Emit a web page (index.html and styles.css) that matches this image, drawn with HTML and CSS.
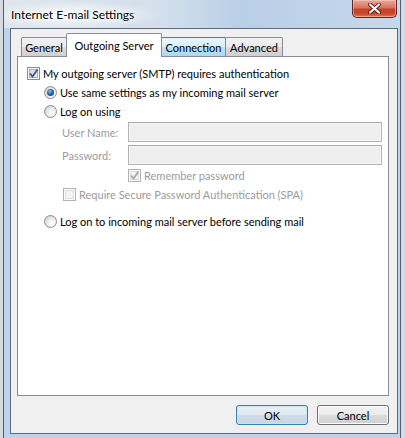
FILE: index.html
```html
<!DOCTYPE html>
<html>
<head>
<meta charset="utf-8">
<link rel="stylesheet" href="styles.css">
</head>
<body>
<div class="window">
  <div class="titlebar">
    <span class="title">Internet E-mail Settings</span>
    <div class="close">
      <svg width="17" height="11" viewBox="0 0 17 11">
        <path d="M4 1.5 L13 9.5 M13 1.5 L4 9.5" stroke="#5a1a12" stroke-width="4" stroke-linecap="round"/>
        <path d="M4 1.5 L13 9.5 M13 1.5 L4 9.5" stroke="#ffffff" stroke-width="2.2" stroke-linecap="round"/>
      </svg>
    </div>
  </div>
  <div class="client">
    <div class="tabs">
      <div class="tab tab-general">General</div>
      <div class="tab tab-outgoing selected">Outgoing Server</div>
      <div class="tab tab-connection hover">Connection</div>
      <div class="tab tab-advanced">Advanced</div>
    </div>
    <div class="panel">
      <div class="row row-main">
        <span class="checkbox">
          <svg class="tick" width="13" height="13" viewBox="0 0 13 13"><path d="M3 6.5 L5.5 9.5 L10.5 2.5" stroke="#3d5597" stroke-width="1.8" fill="none"/></svg>
        </span>
        <span class="label">My outgoing server (SMTP) requires authentication</span>
      </div>
      <div class="indent">
        <div class="row">
          <span class="radio on"></span>
          <span class="label">Use same settings as my incoming mail server</span>
        </div>
        <div class="row">
          <span class="radio"></span>
          <span class="label">Log on using</span>
        </div>
        <div class="fields">
          <span class="flabel disabled">User Name:</span>
          <span class="input"></span>
          <span class="flabel disabled">Password:</span>
          <span class="input"></span>
        </div>
        <div class="row row-remember">
          <span class="checkbox disabled-box">
            <svg class="tick" width="13" height="13" viewBox="0 0 13 13"><path d="M3 6.5 L5.5 9.5 L10.5 2.5" stroke="#a8a8a8" stroke-width="1.8" fill="none"/></svg>
          </span>
          <span class="label disabled">Remember password</span>
        </div>
        <div class="row row-spa">
          <span class="checkbox disabled-box"></span>
          <span class="label disabled">Require Secure Password Authentication (SPA)</span>
        </div>
        <div class="row row-last">
          <span class="radio"></span>
          <span class="label">Log on to incoming mail server before sending mail</span>
        </div>
      </div>
    </div>
    <div class="buttons">
      <button class="btn default">OK</button>
      <button class="btn">Cancel</button>
    </div>
  </div>
</div>
</body>
</html>
```

FILE: styles.css
```css
html, body {
  margin: 0;
  padding: 0;
}
body {
  width: 405px;
  height: 438px;
  overflow: hidden;
  background: #d6dbe1;
  font-family: Lato, "Open Sans", sans-serif;
  font-size: 11px;
  color: #000;
}
.window {
  margin-left: 3px;
  width: 398px;
  height: 446px;
  box-sizing: border-box;
  border: 1px solid #4d5e73;
  border-top: none;
  padding: 0 2px 6px 6px;
  background: #bcd3ec;
  display: flex;
  flex-direction: column;
}
.titlebar {
  height: 28px;
  margin: 0 -2px 0 -6px;
  padding: 0 3px 0 7px;
  display: flex;
  align-items: flex-start;
  background:
    radial-gradient(ellipse 90px 14px at 70px 15px, rgba(255,255,255,0.9), rgba(255,255,255,0) 100%),
    linear-gradient(to right, #dfe6ee 0%, #d3dfeb 40%, #b9cfe7 60%, #c6d8eb 100%);
}
.title {
  margin-top: 7px;
  line-height: 16px;
  font-size: 12px;
  color: #000;
  text-shadow: 0 0 6px #fff, 0 0 3px #fff;
}
.close {
  margin-left: auto;
  width: 45px;
  height: 18px;
  box-sizing: border-box;
  border: 1px solid #5c2a23;
  border-top: none;
  border-radius: 0 0 5px 5px;
  background: linear-gradient(#e9a99b 0%, #d9735f 45%, #c7412a 55%, #c9472d 80%, #e27a55 100%);
  box-shadow: inset 0 0 0 1px rgba(255,220,210,0.45);
  display: flex;
  align-items: center;
  justify-content: center;
}
.client {
  width: 388px;
  height: 406px;
  box-sizing: border-box;
  border: 1px solid #5b6c80;
  background: #f0f0f0;
  padding: 4px 8px 8px 6px;
  display: flex;
  flex-direction: column;
}
.tabs {
  height: 23px;
  display: flex;
  align-items: flex-end;
  padding-left: 4px;
  position: relative;
  z-index: 2;
}
.tab {
  height: 19px;
  box-sizing: border-box;
  border: 1px solid #898c95;
  border-bottom: none;
  border-radius: 2px 2px 0 0;
  background: linear-gradient(#f2f2f2, #ebebeb 50%, #dddddd 50%, #cfcfcf);
  display: flex;
  align-items: center;
  justify-content: center;
  margin-left: -1px;
  white-space: nowrap;
}
.tab-general { width: 46px; margin-left: 0; }
.tab-outgoing { width: 96px; }
.tab-connection { width: 65px; }
.tab-advanced { width: 58px; }
.tab.selected {
  height: 24px;
  margin-bottom: -1px;
  background: #fff;
  padding-bottom: 1px;
  position: relative;
  z-index: 3;
}
.tab.hover {
  border-color: #3c7fb1;
  background: linear-gradient(#eaf6fd, #d9f0fc 50%, #bee6fd 50%, #a7d9f5);
}
.panel {
  height: 340px;
  box-sizing: border-box;
  border: 1px solid #898c95;
  background: #fff;
  padding: 7px 0 0 9px;
  position: relative;
  z-index: 1;
}
.row {
  height: 19px;
  display: flex;
  align-items: center;
}
.label {
  margin-left: 3px;
  white-space: nowrap;
}
.disabled {
  color: #9b9b9b;
}
.checkbox {
  width: 13px;
  height: 13px;
  box-sizing: border-box;
  border: 1px solid #8e8f8f;
  background: linear-gradient(135deg, #cbcfd5, #f6f6f6);
  box-shadow: inset 0 0 0 1px #f4f4f4, inset 0 0 0 2px #aeb3b9;
  position: relative;
  flex: none;
}
.checkbox .tick {
  position: absolute;
  left: -1px;
  top: -1px;
}
.checkbox.disabled-box {
  border-color: #b1b1b1;
  background: #f4f4f4;
  box-shadow: inset 0 0 0 1px #fff, inset 0 0 0 2px #dcdcdc;
}
.indent {
  margin-left: 17px;
}
.radio {
  width: 13px;
  height: 13px;
  box-sizing: border-box;
  border-radius: 50%;
  border: 1px solid #8b8e91;
  background: radial-gradient(circle at 65% 65%, #ffffff 0, #f1f1f1 35%, #c4c7cb 100%);
  display: flex;
  align-items: center;
  justify-content: center;
  flex: none;
}
.radio.on::after {
  content: "";
  width: 7px;
  height: 7px;
  border-radius: 50%;
  background: radial-gradient(circle at 40% 35%, #8ec3ef 0, #2c6fae 40%, #0d3563 100%);
}
.fields {
  margin-top: 1px;
  display: grid;
  grid-template-columns: 66px 254px;
  row-gap: 3px;
  padding-left: 18px;
  align-items: center;
}
.input {
  height: 20px;
  box-sizing: border-box;
  border: 1px solid #b3b3b3;
  border-top-color: #a8a8a8;
  background: #efefef;
  box-shadow: inset 0 0 0 1px #f6f6f6;
}
.row-remember {
  margin-top: 1px;
  padding-left: 84px;
}
.row-spa {
  padding-left: 19px;
}
.row-last {
  margin-top: 8px;
}
.buttons {
  margin-top: 9px;
  display: flex;
  justify-content: flex-end;
  gap: 9px;
}
.btn {
  width: 72px;
  height: 20px;
  box-sizing: border-box;
  border: 1px solid #707070;
  border-radius: 3px;
  background: linear-gradient(#f2f2f2 0%, #ebebeb 50%, #dddddd 50%, #cfcfcf 100%);
  box-shadow: inset 0 0 0 1px #fcfcfc;
  font-family: Lato, "Open Sans", sans-serif;
  font-size: 11px;
  color: #000;
  padding: 0;
}
.btn.default {
  border-color: #3c7fb1;
  background: linear-gradient(#eaf1f6 0%, #dfe8ef 50%, #d0dde8 50%, #c6d6e3 100%);
  box-shadow: inset 0 0 0 1px #c4e5f6;
}
```
